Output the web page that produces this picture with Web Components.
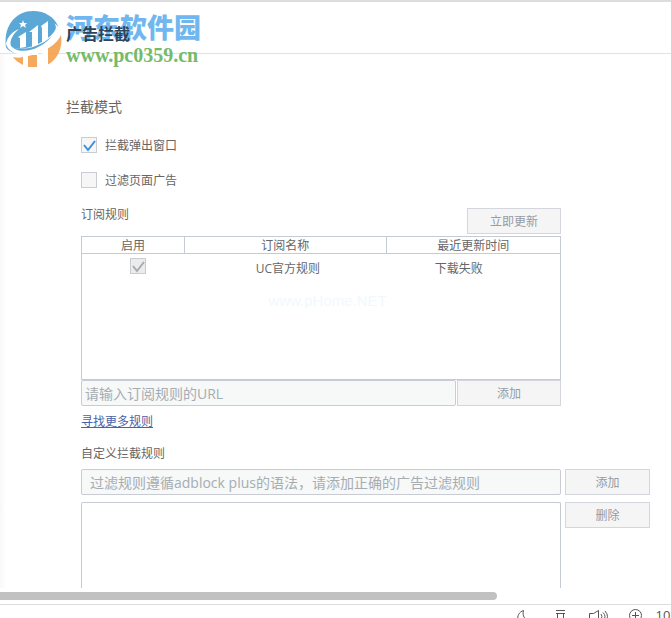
<!DOCTYPE html>
<html lang="zh-CN">
<head>
<meta charset="utf-8">
<title>广告拦截</title>
<style>
  body {
    margin: 0;
    font: 12px/18px "Open Sans", "Noto Sans CJK SC", sans-serif;
    color: #666;
    background: #fff;
  }
</style>
</head>
<body>
<settings-page></settings-page>
<script>
class SiteMark extends HTMLElement {
  constructor() {
    super();
    this.attachShadow({ mode: "open" });
  }

  static get styles() {
    return /* css */`
      :host {
        display: flex;
        align-items: center;
        gap: 4px;
        white-space: nowrap;
      }

      svg {
        width: 58px;
        height: 58px;
      }

      .name {
        font: 900 27px/32px "Noto Sans CJK SC", sans-serif;
        color: #62b0ee;
      }

      .url {
        font: bold 20px/24px "Liberation Serif", serif;
        color: #68b35a;
      }
    `;
  }

  connectedCallback() {
    this.shadowRoot.innerHTML = /* html */`
    <style>${SiteMark.styles}</style>
    <svg viewBox="0 0 58 58" aria-hidden="true">
      <path fill="#4a9fd3" d="M2 37C-1 17 11 1 29 1c12 0 21 6 25 15-2 14-20 27-38 28C8 43 3 40 2 37Z"/>
      <path fill="#f5a04c" d="M57 25c2 14-4 25-14 30V39c7-4 11-8 14-14ZM24 46l9-2v13h-9ZM9 47c4 1 7 1 10 0v8c-4-2-8-5-10-8Z"/>
      <path fill="#fff" d="M2 34c1-7 7-13 13-15-6 5-10 12-8 17 6 7 32 0 43-14 3-4 2-7 0-9 8 5 8 13-2 21C33 46 7 50 2 34Z"/>
      <path fill="#fff" d="M14 27l8-5v15l-6 1V28ZM25 22l9-7v30h-6V22ZM37 16l7-5v45h-6V18Z"/>
      <path fill="#4a9fd3" d="M8 37c10 4 27 1 40-11-9 12-30 20-40 11Z"/>
      <path fill="#fff" d="M19 10l1 3 3 0-2 2 1 3-3-2-3 2 1-3-2-2 3 0Z"/>
    </svg>
    <div>
      <div class="name">河东软件园</div>
      <div class="url">www.pc0359.cn</div>
    </div>`;
  }
}

class PushButton extends HTMLElement {
  constructor() {
    super();
    this.attachShadow({ mode: "open" });
  }

  static get styles() {
    return /* css */`
      :host {
        display: block;
      }

      button {
        display: block;
        width: 100%;
        height: 26px;
        padding: 2px 0 0;
        font: inherit;
        color: #949ca6;
        background: #f5f5f5;
        border: 1px solid #d3d6dc;
      }
    `;
  }

  connectedCallback() {
    this.shadowRoot.innerHTML = /* html */`
    <style>${PushButton.styles}</style>
    <button type="button"><slot></slot></button>`;
  }
}

class CheckOption extends HTMLElement {
  constructor() {
    super();
    this.attachShadow({ mode: "open" });
  }

  static get styles() {
    return /* css */`
      :host {
        display: block;
        --tick: #3a8ee0;
      }

      :host([disabled]) {
        --tick: #aaa;
      }

      label {
        display: flex;
        align-items: flex-start;
        gap: 8px;
      }

      .box {
        display: grid;
        flex: none;
        width: 16px;
        height: 16px;
      }

      input, svg {
        grid-area: 1 / 1;
      }

      input {
        appearance: none;
        box-sizing: border-box;
        width: 16px;
        height: 16px;
        margin: 0;
        background: #f6f6f6;
        border: 1px solid #c9cdd2;
      }

      svg {
        width: 16px;
        height: 16px;
        fill: none;
        stroke: var(--tick);
        stroke-width: 2;
        visibility: hidden;
        pointer-events: none;
      }

      input:checked + svg {
        visibility: visible;
      }

      input:disabled {
        background: #ececec;
      }
    `;
  }

  connectedCallback() {
    const checked = this.hasAttribute("checked") ? "checked" : "";
    const disabled = this.hasAttribute("disabled") ? "disabled" : "";
    const name = this.getAttribute("label");
    this.shadowRoot.innerHTML = /* html */`
    <style>${CheckOption.styles}</style>
    <label>
      <span class="box">
        <input type="checkbox" ${checked} ${disabled} ${name ? `aria-label="${name}"` : ""}>
        <svg viewBox="0 0 16 16"><path d="M3 8l4 5 7-9"/></svg>
      </span>
      <slot></slot>
    </label>`;
  }
}

class RuleInput extends HTMLElement {
  constructor() {
    super();
    this.attachShadow({ mode: "open" });
  }

  static get styles() {
    return /* css */`
      :host {
        display: block;
        min-width: 0;
      }

      input {
        box-sizing: border-box;
        display: block;
        width: 100%;
        height: 26px;
        padding: 0 var(--inset, 3px);
        font: inherit;
        font-size: 14px;
        background: #f7f8f8;
        border: 1px solid #c9ccd3;
        border-radius: 2px;
      }

      input::placeholder {
        color: #a5adb3;
        opacity: 1;
      }
    `;
  }

  connectedCallback() {
    const hint = this.getAttribute("placeholder");
    this.shadowRoot.innerHTML = /* html */`
    <style>${RuleInput.styles}</style>
    <input type="text" placeholder="${hint}" aria-label="${hint}">`;
  }
}

class RuleTable extends HTMLElement {
  constructor() {
    super();
    this.attachShadow({ mode: "open" });
  }

  static get styles() {
    return /* css */`
      :host {
        display: block;
        box-sizing: border-box;
        height: 144px;
        border: 1px solid #c6cbd1;
        position: relative;
      }

      table {
        width: 100%;
        table-layout: fixed;
        border-spacing: 0;
      }

      th, td {
        padding: 2px 0 0;
        font-weight: normal;
        text-align: center;
      }

      th {
        line-height: 14px;
        border-bottom: 1px solid #c6cbd1;
      }

      th + th {
        border-left: 1px solid #c6cbd1;
      }

      th:first-child {
        width: 102px;
      }

      th:nth-child(2) {
        width: 42%;
      }

      td {
        height: 26px;
      }

      td:nth-child(2) {
        padding-left: 6px;
      }

      td:last-child {
        padding-right: 28px;
      }

      check-option {
        display: inline-block;
        vertical-align: top;
        padding: 0 0 6px 9px;
      }

      .mark {
        position: absolute;
        top: 56px;
        left: 39%;
        font: 15px/16px "Liberation Sans", sans-serif;
        color: #f1f9fc;
      }
    `;
  }

  connectedCallback() {
    this.shadowRoot.innerHTML = /* html */`
    <style>${RuleTable.styles}</style>
    <table>
      <thead>
        <tr><th>启用</th><th>订阅名称</th><th>最近更新时间</th></tr>
      </thead>
      <tbody>
        <tr>
          <td><check-option checked disabled label="启用"></check-option></td>
          <td>UC官方规则</td>
          <td>下载失败</td>
        </tr>
      </tbody>
    </table>
    <span class="mark">www.pHome.NET</span>`;
  }
}

class StatusBar extends HTMLElement {
  constructor() {
    super();
    this.attachShadow({ mode: "open" });
  }

  static get styles() {
    return /* css */`
      :host {
        display: flex;
        justify-content: flex-end;
        height: 13px;
        border-top: 1px solid #ddd;
        overflow: hidden;
      }

      button {
        flex: none;
        display: block;
        height: 20px;
        margin: 0;
        padding: 0;
        font: 13px/20px "Open Sans", sans-serif;
        color: #555;
        background: none;
        border: 0;
      }

      .icon {
        width: 38px;
      }

      .zoom {
        width: 16px;
      }

      svg {
        display: block;
        width: 20px;
        height: 20px;
        margin: 0 auto;
        fill: none;
        stroke: #555;
      }
    `;
  }

  connectedCallback() {
    this.shadowRoot.innerHTML = /* html */`
    <style>${StatusBar.styles}</style>
    <button class="icon" type="button" aria-label="夜间模式">
      <svg viewBox="0 0 20 20"><path d="M11.500 5.500C7 7 5 11 6 15c2 4 9 4 11 0-4 0-7-4-5.500-9.500Z"/></svg>
    </button>
    <button class="icon" type="button" aria-label="页面工具">
      <svg viewBox="0 0 20 20"><path d="M6 5.500h9M6 8.500h9M7.500 8.500h6v9h-6Z"/></svg>
    </button>
    <button class="icon" type="button" aria-label="声音">
      <svg viewBox="0 0 20 20"><path d="M1.500 8.500h4l5-3v12l-5-3h-4ZM13 9q2 2.500 0 5M15 7.500q4 4 0 8M17 6q5 5.500 0 11"/></svg>
    </button>
    <button class="icon" type="button" aria-label="放大">
      <svg viewBox="0 0 20 20"><circle cx="9.500" cy="10.500" r="6"/><path d="M9.500 7v7M6 10.500h7"/></svg>
    </button>
    <button class="zoom" type="button">10</button>`;
  }
}

class SettingsPage extends HTMLElement {
  constructor() {
    super();
    this.attachShadow({ mode: "open" });
  }

  static get styles() {
    return /* css */`
      :host {
        --line: #c6cbd1;

        display: flex;
        flex-direction: column;
        height: 100vh;
        overflow: hidden;
      }

      header {
        box-sizing: border-box;
        flex: none;
        position: relative;
        height: 54px;
        padding: 22px 0 0 66px;
        border-top: 2px solid #ddd;
        border-bottom: 1px solid #e2e2e2;
      }

      h1 {
        position: relative;
        z-index: 1;
        margin: 0;
        font-size: 16px;
        line-height: 20px;
        color: #2f4358;
      }

      site-mark {
        position: absolute;
        top: 8px;
        left: 4px;
        opacity: 0.9;
      }

      main {
        flex: 1;
        min-height: 0;
        display: flex;
        flex-direction: column;
        padding: 43px 21px 0 66px;
        overflow: hidden;
        background: linear-gradient(to right, #f8f8f8, #fff 6px);
      }

      h2 {
        margin: 0;
        font-size: 14px;
        font-weight: normal;
        line-height: 20px;
      }

      h3 {
        margin: 0;
        font-size: 12px;
        font-weight: normal;
      }

      .options {
        display: flex;
        flex-direction: column;
        gap: 17px;
        padding: 20px 0 0 15px;
      }

      .rules {
        flex: 1;
        min-height: 0;
        display: grid;
        grid-template-columns: 1fr 85px;
        grid-template-rows: repeat(6, auto) 1fr;
        column-gap: 4px;
        padding: 16px 0 0 15px;
      }

      .rules > * {
        grid-column: 1;
      }

      .bar {
        display: flex;
        justify-content: space-between;
        padding-bottom: 2px;
      }

      .bar push-button {
        width: 94px;
        padding-top: 2px;
      }

      .add {
        display: grid;
        grid-template-columns: 1fr 104px;
        gap: 1px;
      }

      a {
        justify-self: start;
        margin-top: 7px;
        color: #4a62a6;
      }

      .own {
        padding: 14px 0 6px;
      }

      .own-input {
        --inset: 8px;
        grid-row: 6;
      }

      .rules .side {
        grid-column: 2;
        grid-row: 6 / span 2;
        display: flex;
        flex-direction: column;
        gap: 7px;
      }

      textarea {
        grid-row: 7;
        box-sizing: border-box;
        width: 100%;
        min-height: 0;
        margin: 7px 0 0;
        resize: none;
        border: 1px solid var(--line);
        border-bottom: 0;
        border-radius: 2px 2px 0 0;
      }

      .scroll {
        flex: none;
        padding: 4px 0;
      }

      .scroll div {
        width: 74%;
        height: 8px;
        background: #c1c1c1;
        border-radius: 0 4px 4px 0;
      }

      status-bar {
        flex: none;
      }
    `;
  }

  connectedCallback() {
    this.shadowRoot.innerHTML = /* html */`
    <style>${SettingsPage.styles}</style>
    <header>
      <h1>广告拦截</h1>
      <site-mark></site-mark>
    </header>
    <main>
      <h2>拦截模式</h2>
      <div class="options">
        <check-option checked>拦截弹出窗口</check-option>
        <check-option>过滤页面广告</check-option>
      </div>
      <div class="rules">
        <div class="bar">
          <h3>订阅规则</h3>
          <push-button>立即更新</push-button>
        </div>
        <rule-table></rule-table>
        <div class="add">
          <rule-input placeholder="请输入订阅规则的URL"></rule-input>
          <push-button>添加</push-button>
        </div>
        <a href="#">寻找更多规则</a>
        <h3 class="own">自定义拦截规则</h3>
        <rule-input class="own-input" placeholder="过滤规则遵循adblock plus的语法，请添加正确的广告过滤规则"></rule-input>
        <div class="side">
          <push-button>添加</push-button>
          <push-button>删除</push-button>
        </div>
        <textarea aria-label="自定义拦截规则"></textarea>
      </div>
    </main>
    <div class="scroll"><div></div></div>
    <status-bar></status-bar>`;
  }
}

customElements.define("site-mark", SiteMark);
customElements.define("push-button", PushButton);
customElements.define("check-option", CheckOption);
customElements.define("rule-input", RuleInput);
customElements.define("rule-table", RuleTable);
customElements.define("status-bar", StatusBar);
customElements.define("settings-page", SettingsPage);
</script>
</body>
</html>
